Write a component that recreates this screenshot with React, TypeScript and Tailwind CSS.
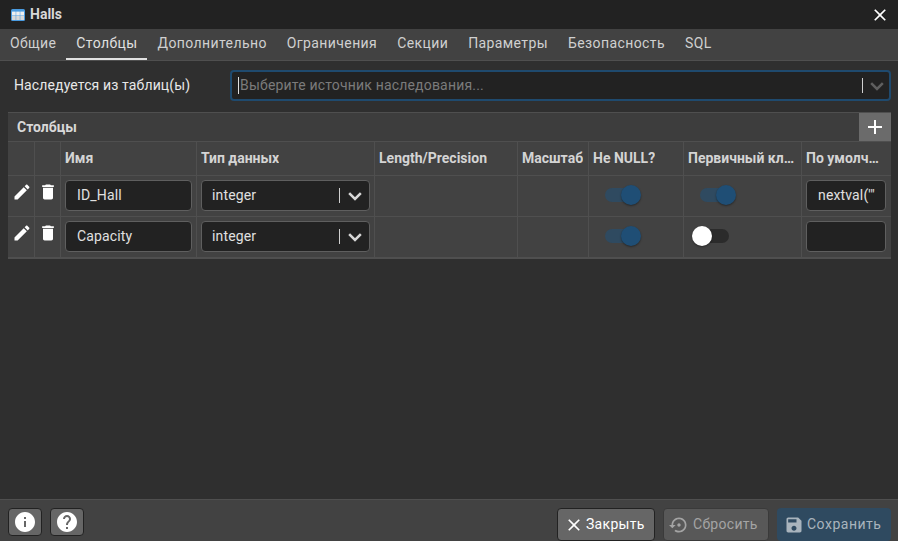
import React from 'react';

const tabs = ['Общие', 'Столбцы', 'Дополнительно', 'Ограничения', 'Секции', 'Параметры', 'Безопасность', 'SQL'];

const headers = ['', '', 'Имя', 'Тип данных', 'Length/Precision', 'Масштаб', 'Не NULL?', 'Первичный ключ?', 'По умолчанию'];

const gridCols = 'grid grid-cols-[27px_26px_136px_178px_143px_71px_95px_118px_89px]';

const Icon = ({ d, className }: { d: string; className: string }) => (
  <svg viewBox="0 0 24 24" fill="currentColor" className={className}>
    <path d={d} />
  </svg>
);

const Chevron = ({ className }: { className: string }) => (
  <svg viewBox="0 0 24 24" fill="none" stroke="currentColor" strokeWidth="3" className={className}>
    <path d="M5 8.5l7 7 7-7" />
  </svg>
);

const Toggle = ({ on }: { on: boolean }) =>
  on ? (
    <div className="ml-[16px] mt-[-3px] relative w-[34px] h-[14px] rounded-full bg-[#2f4a60]">
      <div className="absolute right-[-2px] top-[-3px] w-[20px] h-[20px] rounded-full bg-[#1f4e75] shadow-[0_1px_2px_rgba(0,0,0,0.4)]" />
    </div>
  ) : (
    <div className="ml-[11px] mt-[-3px] relative w-[34px] h-[14px] rounded-full bg-[#2b2b2b]">
      <div className="absolute left-[-3px] top-[-3px] w-[20px] h-[20px] rounded-full bg-white shadow-[0_1px_2px_rgba(0,0,0,0.4)]" />
    </div>
  );

const TextBox = ({ value, last }: { value: string; last?: boolean }) => (
  <div
    className={`h-[31px] ml-[4px] ${last ? 'mr-[5px]' : 'mr-[4px]'} px-[11px] flex items-center bg-[#222222] border border-[#5f5f5f] rounded text-[14px] tracking-[0.15px] text-[#e0e0e0] overflow-hidden whitespace-nowrap`}
  >
    {value}
  </div>
);

const TypeSelect = () => (
  <div className="h-[31px] mx-[4px] pl-[10px] pr-[4px] flex items-center bg-[#222222] border border-[#5f5f5f] rounded text-[14px] tracking-[0.15px] text-[#e0e0e0]">
    <span className="flex-1">integer</span>
    <div className="w-px h-[15px] bg-[#d0d0d0] mr-[5px]" />
    <Chevron className="w-[20px] h-[20px] text-[#d8d8d8]" />
  </div>
);

const Row = ({ name, def, primary }: { name: string; def: string; primary: boolean }) => (
  <div className={`${gridCols} h-[41px] border-t border-[#4f4f4f]`}>
    <div className="border-r border-[#4f4f4f] flex items-center justify-center pb-[9px] pl-[2px]">
      <Icon
        d="M3 17.25V21h3.75L17.81 9.94l-3.75-3.75L3 17.25zM20.71 7.04c.39-.39.39-1.02 0-1.41l-2.34-2.34c-.39-.39-1.02-.39-1.41 0l-1.83 1.83 3.75 3.75 1.83-1.83z"
        className="w-[20px] h-[20px] text-white"
      />
    </div>
    <div className="border-r border-[#4f4f4f] flex items-center justify-center pb-[9px]">
      <Icon
        d="M6 19c0 1.1.9 2 2 2h8c1.1 0 2-.9 2-2V7H6v12zM19 4h-3.5l-1-1h-5l-1 1H5v2h14V4z"
        className="w-[20px] h-[20px] text-white"
      />
    </div>
    <div className="border-r border-[#4f4f4f] pt-[4px]">
      <TextBox value={name} />
    </div>
    <div className="border-r border-[#4f4f4f] pt-[4px]">
      <TypeSelect />
    </div>
    <div className="border-r border-[#4f4f4f]" />
    <div className="border-r border-[#4f4f4f]" />
    <div className="border-r border-[#4f4f4f] flex items-center">
      <Toggle on />
    </div>
    <div className="border-r border-[#4f4f4f] flex items-center">
      <Toggle on={primary} />
    </div>
    <div className="pt-[4px]">
      <TextBox value={def} last />
    </div>
  </div>
);

export default function App() {
  return (
    <div className="w-[898px] h-[541px] flex flex-col overflow-hidden bg-[#2f2f2f] font-['Roboto',sans-serif] text-[14px] text-[#e0e0e0]">
      <div className="h-[29px] flex items-center justify-between bg-[#222222] pl-[11px] pr-[8px]">
        <div className="flex items-center gap-[5px]">
          <svg viewBox="0 0 14 12" className="w-[14px] h-[12px]">
            <rect width="14" height="12" rx="1.5" fill="#4a9be0" />
            <rect x="1" y="2.6" width="3.7" height="3.9" fill="#efefef" />
            <rect x="5.2" y="2.6" width="3.6" height="3.9" fill="#efefef" />
            <rect x="9.3" y="2.6" width="3.7" height="3.9" fill="#efefef" />
            <rect x="1" y="7" width="3.7" height="4" fill="#d8d8d8" />
            <rect x="5.2" y="7" width="3.6" height="4" fill="#d8d8d8" />
            <rect x="9.3" y="7" width="3.7" height="4" fill="#d8d8d8" />
          </svg>
          <span className="font-bold text-[#d8d8d8]">Halls</span>
        </div>
        <Icon
          d="M19 6.41L17.59 5 12 10.59 6.41 5 5 6.41 10.59 12 5 17.59 6.41 19 12 13.41 17.59 19 19 17.59 13.41 12z"
          className="w-[20px] h-[20px] text-white"
        />
      </div>

      <div className="h-[32px] flex bg-[#424242] border-b border-[#4f4f4f]">
        {tabs.map((tab) => (
          <div
            key={tab}
            className={`px-[10px] flex items-center pb-[1px] border-b-[2px] h-[31px] tracking-[0.4px] ${
              tab === 'Столбцы' ? 'border-[#e0e0e0] text-[#e0e0e0]' : 'border-transparent text-[#d0d0d0]'
            }`}
          >
            {tab}
          </div>
        ))}
      </div>

      <div className="flex items-center pl-[14px] pr-[7px] mt-[9px]">
        <div className="w-[216px] text-[#e8e8e8] tracking-[0.13px]">Наследуется из таблиц(ы)</div>
        <div className="flex-1 h-[31px] flex items-center bg-[#222222] border-2 border-[#1f4a6e] rounded pl-[6px] pr-[2px]">
          <div className="w-px h-[17px] bg-[#e0e0e0]" />
          <span className="flex-1 ml-[1px] text-[#7b7b7b] tracking-[0.18px]">Выберите источник наследования...</span>
          <div className="w-px h-[15px] bg-[#d0d0d0] mr-[4px]" />
          <Chevron className="w-[20px] h-[20px] text-[#5f5f5f]" />
        </div>
      </div>

      <div className="mx-[8px] mt-[11px] w-[883px] bg-[#424242] border-b-[2px] border-[#4f4f4f]">
        <div className="h-[29px] flex items-center justify-between pl-[9px] bg-[#3d3d3d] border-t border-[#4f4f4f]">
          <span className="font-bold text-[#d8d8d8]">Столбцы</span>
          <div className="w-[32px] h-[28px] flex items-center justify-center bg-[#6b6b6b]">
            <Icon d="M19 13h-6v6h-2v-6H5v-2h6V5h2v6h6v2z" className="w-[24px] h-[24px] text-white" />
          </div>
        </div>
        <div className={`${gridCols} h-[34px] border-t border-[#4f4f4f]`}>
          {headers.map((header, i) => (
            <div
              key={i}
              className={`pl-[4px] flex items-center font-bold text-[#d4d4d4] ${
                i < 8 ? 'pr-[3px] border-r border-[#4f4f4f]' : 'pr-[10px]'
              }`}
            >
              <span className="truncate">{header}</span>
            </div>
          ))}
        </div>
        <Row name="ID_Hall" def="nextval('&quot;" primary />
        <Row name="Capacity" def="" primary={false} />
      </div>

      <div className="flex-1" />

      <div className="h-[42px] shrink-0 flex items-start justify-between bg-[#424242] border-t border-[#4f4f4f] pt-[8px] pl-[8px] pr-[7px]">
        <div className="flex gap-[8px]">
          <div className="w-[34px] h-[28px] flex items-center justify-center bg-[#666666] border border-[#222222] rounded">
            <Icon
              d="M12 2C6.48 2 2 6.48 2 12s4.48 10 10 10 10-4.48 10-10S17.52 2 12 2zm1 15h-2v-6h2v6zm0-8h-2V7h2v2z"
              className="w-[24px] h-[24px] text-white"
            />
          </div>
          <div className="w-[34px] h-[28px] flex items-center justify-center bg-[#666666] border border-[#222222] rounded">
            <Icon
              d="M12 2C6.48 2 2 6.48 2 12s4.48 10 10 10 10-4.48 10-10S17.52 2 12 2zm1 17h-2v-2h2v2zm2.07-7.75l-.9.92C13.45 12.9 13 13.5 13 15h-2v-.5c0-1.1.45-2.1 1.17-2.83l1.24-1.26c.37-.36.59-.86.59-1.41 0-1.1-.9-2-2-2s-2 .9-2 2H8c0-2.21 1.79-4 4-4s4 1.79 4 4c0 .88-.36 1.68-.93 2.25z"
              className="w-[24px] h-[24px] text-white"
            />
          </div>
        </div>
        <div className="flex gap-[8px]">
          <div className="w-[98px] h-[33px] flex items-center gap-[2px] pl-[6px] bg-[#666666] border border-[#222222] rounded text-white tracking-[0.3px]">
            <Icon
              d="M19 6.41L17.59 5 12 10.59 6.41 5 5 6.41 10.59 12 5 17.59 6.41 19 12 13.41 17.59 19 19 17.59 13.41 12z"
              className="w-[20px] h-[20px]"
            />
            Закрыть
          </div>
          <div className="w-[106px] h-[33px] flex items-center gap-[4px] pl-[5px] bg-[#585858] border border-[#3a3a3a] rounded text-[#a4a4a4] tracking-[0.3px]">
            <Icon
              d="M14 12c0-1.1-.9-2-2-2s-2 .9-2 2 .9 2 2 2 2-.9 2-2zm-2-9c-4.97 0-9 4.03-9 9H0l4 4 4-4H5c0-3.87 3.13-7 7-7s7 3.13 7 7-3.13 7-7 7c-1.51 0-2.91-.49-4.06-1.3l-1.42 1.44C8.04 20.3 9.94 21 12 21c4.97 0 9-4.03 9-9s-4.03-9-9-9z"
              className="w-[20px] h-[20px]"
            />
            Сбросить
          </div>
          <div className="w-[114px] h-[33px] flex items-center gap-[3px] pl-[7px] bg-[#2f4a60] rounded text-[#a9b4bd] tracking-[0.5px]">
            <Icon
              d="M17 3H5c-1.11 0-2 .9-2 2v14c0 1.1.89 2 2 2h14c1.1 0 2-.9 2-2V7l-4-4zm-5 16c-1.66 0-3-1.34-3-3s1.34-3 3-3 3 1.34 3 3-1.34 3-3 3zm3-10H5V5h10v4z"
              className="w-[20px] h-[20px]"
            />
            Сохранить
          </div>
        </div>
      </div>
    </div>
  );
}
